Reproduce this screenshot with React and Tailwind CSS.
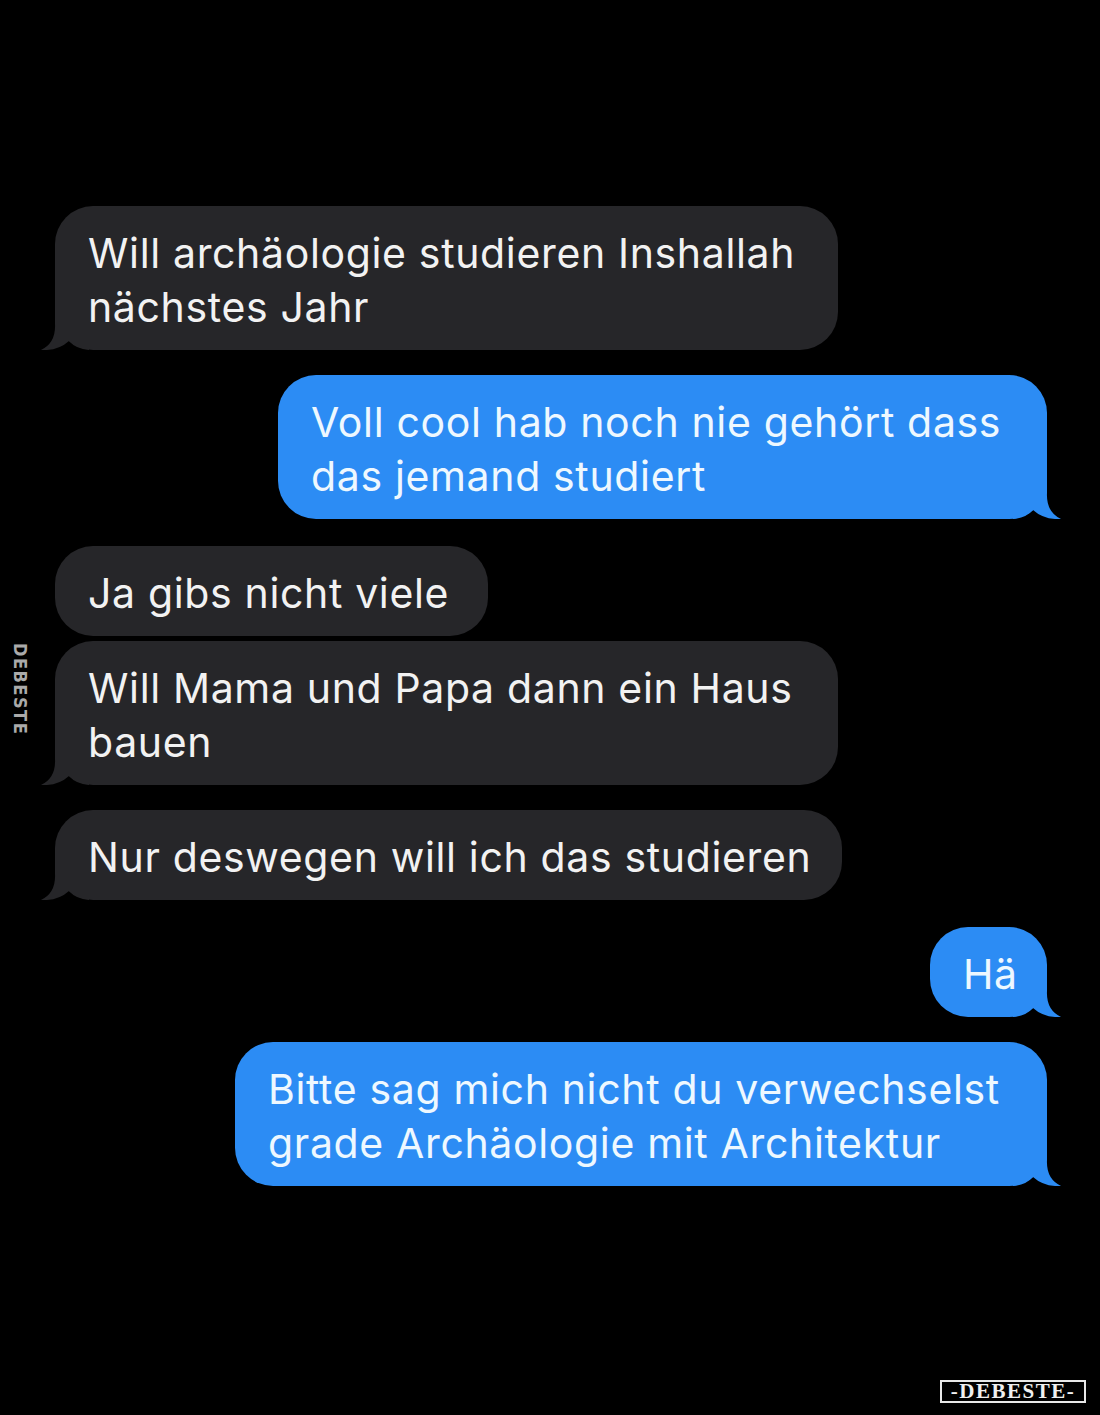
import React from 'react';

const Tail = ({ side, color }) => (
  <svg
    width="48"
    height="46"
    viewBox="0 0 48 46"
    className={`absolute bottom-0 ${side === 'left' ? 'left-[-14px]' : 'right-[-14px] -scale-x-100'}`}
  >
    <path d="M14 0 L14 20 Q15 39 0 46 Q17 47 28 37 Q35 45 48 46 L48 0 Z" fill={color} />
  </svg>
);

const Bubble = ({ side, tail, width, lines }) => {
  const gray = side === 'left';
  return (
    <div className={`flex ${gray ? 'justify-start' : 'justify-end'}`}>
      <div
        className={`relative rounded-[38px] pt-[20px] pb-[16px] pl-[33px] pr-[32px] text-[41px] leading-[54px] tracking-[0.65px] ${
          gray ? 'bg-[#262629] text-[#f2f2f2]' : 'bg-[#2c8cf4] text-[#eef8ff]'
        } ${width}`}
      >
        {tail && <Tail side={side} color={gray ? '#262629' : '#2c8cf4'} />}
        <div className="relative">
          {lines.map((l, i) => (
            <div key={i} className="whitespace-nowrap">{l}</div>
          ))}
        </div>
      </div>
    </div>
  );
};

export default function App() {
  return (
    <div className="relative w-[1100px] h-[1415px] bg-black overflow-hidden font-['Inter','Liberation_Sans',sans-serif]">
      <div className="flex flex-col pt-[206px] pl-[55px] pr-[53px]">
        <Bubble side="left" tail width="w-[783px]" lines={['Will archäologie studieren Inshallah', 'nächstes Jahr']} />
        <div className="h-[25px]" />
        <Bubble side="right" tail width="w-[769px]" lines={['Voll cool hab noch nie gehört dass', 'das jemand studiert']} />
        <div className="h-[27px]" />
        <Bubble side="left" width="w-[433px]" lines={['Ja gibs nicht viele']} />
        <div className="h-[5px]" />
        <Bubble side="left" tail width="w-[783px]" lines={['Will Mama und Papa dann ein Haus', 'bauen']} />
        <div className="h-[25px]" />
        <Bubble side="left" tail width="w-[787px]" lines={['Nur deswegen will ich das studieren']} />
        <div className="h-[27px]" />
        <Bubble side="right" tail width="w-[117px]" lines={['Hä']} />
        <div className="h-[25px]" />
        <Bubble side="right" tail width="w-[812px]" lines={['Bitte sag mich nicht du verwechselst', 'grade Archäologie mit Architektur']} />
      </div>

      <div className="absolute left-[11px] top-[643px] [writing-mode:vertical-rl] text-[18px] leading-[19px] font-bold tracking-[1.5px] text-[#aaaaaa] font-['DejaVu_Sans_Condensed','DejaVu_Sans',sans-serif]">
        DEBESTE
      </div>

      <div className="absolute left-[940px] top-[1380px] w-[146px] h-[23px] border-2 border-[#e8e8e8] flex items-center justify-center">
        <span className="text-[21px] leading-none font-bold text-[#f0f0f0] tracking-[1.5px] font-['Liberation_Serif',serif]">-DEBESTE-</span>
      </div>
    </div>
  );
}
